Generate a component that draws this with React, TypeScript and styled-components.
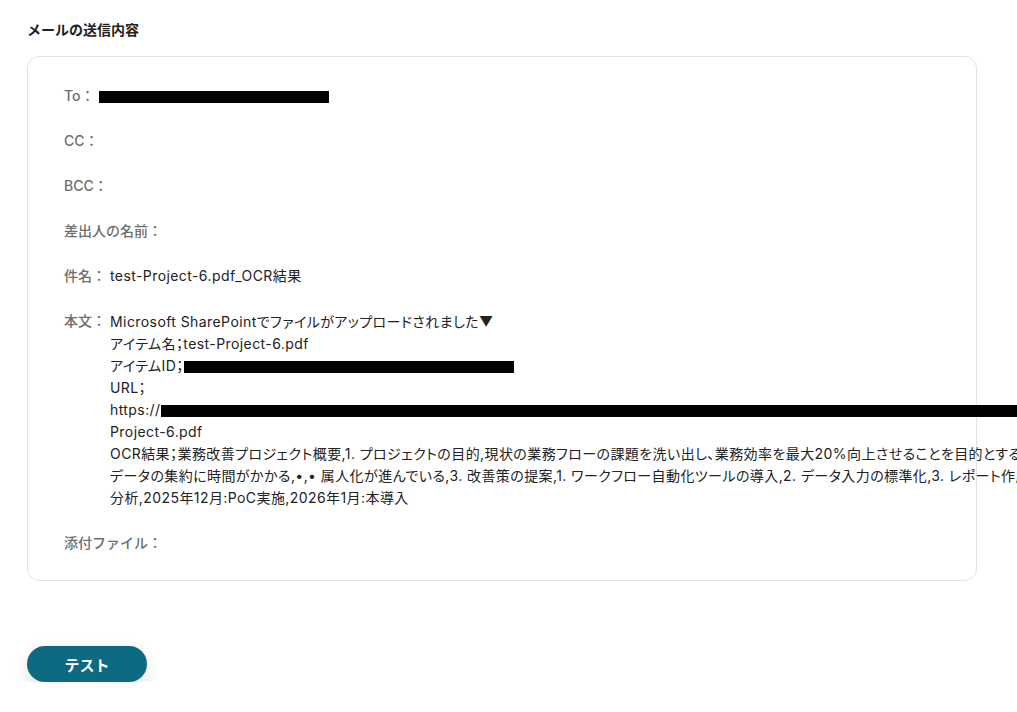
import React from "react";
import styled, { createGlobalStyle } from "styled-components";

const Global = createGlobalStyle`
  html, body {
    margin: 0;
    padding: 0;
    background: #fff;
    overflow: hidden;
  }
  body {
    font-family: Inter, "Noto Sans CJK JP", sans-serif;
    color: #222;
  }
`;

const Page = styled.div`
  padding: 20px 41px 0 27px;
  width: 1017px;
  box-sizing: border-box;
`;

const Heading = styled.h2`
  margin: 0 0 16px;
  font-size: 14px;
  font-weight: 700;
  line-height: 20px;
  color: #222;
`;

const Card = styled.div`
  width: 950px;
  box-sizing: border-box;
  border: 1px solid #e2e2e2;
  border-radius: 12px;
  padding: 28px 36px 26px;
  display: flex;
  flex-direction: column;
  gap: 23px;
`;

const Row = styled.div`
  display: flex;
  align-items: flex-start;
  gap: 4px;
  font-size: 14px;
  line-height: 22px;
`;

const Label = styled.span`
  color: #6e6e6e;
  font-weight: 500;
  white-space: nowrap;
  flex: none;
`;

const Value = styled.div`
  color: #222;
  white-space: nowrap;
  font-feature-settings: "palt";
  letter-spacing: 0.03em;
`;

const Body = styled(Value)`
  line-height: 22px;
  margin-top: 1px;
`;

const Line = styled.div`
  white-space: nowrap;
`;

const Redact = styled.span<{ $w: number }>`
  display: inline-block;
  width: ${(p) => p.$w}px;
  height: 12px;
  background: #000;
  vertical-align: middle;
`;

const Button = styled.button`
  margin-top: 65px;
  width: 120px;
  height: 36px;
  border: none;
  border-radius: 18px;
  background: #0d6a82;
  color: #fff;
  font-family: Inter, "Noto Sans CJK JP", sans-serif;
  font-size: 15px;
  font-weight: 700;
  box-shadow: 0 6px 16px rgba(0, 0, 0, 0.12);
  cursor: pointer;
`;

export default function App() {
  return (
    <>
      <Global />
      <Page>
        <Heading>メールの送信内容</Heading>
        <Card>
          <Row>
            <Label>To：</Label>
            <Value>
              <Redact $w={230} />
            </Value>
          </Row>
          <Row>
            <Label>CC：</Label>
          </Row>
          <Row>
            <Label>BCC：</Label>
          </Row>
          <Row>
            <Label>差出人の名前：</Label>
          </Row>
          <Row>
            <Label>件名：</Label>
            <Value>test-Project-6.pdf_OCR結果</Value>
          </Row>
          <Row>
            <Label>本文：</Label>
            <Body>
              <Line>Microsoft SharePointでファイルがアップロードされました▼</Line>
              <Line>アイテム名；test-Project-6.pdf</Line>
              <Line>
                アイテムID；<Redact $w={330} />
              </Line>
              <Line>URL；</Line>
              <Line>
                https://<Redact $w={860} />
              </Line>
              <Line>Project-6.pdf</Line>
              <Line>
                OCR結果；業務改善プロジェクト概要,1. プロジェクトの目的,現状の業務フローの課題を洗い出し、業務効率を最大20%向上させることを目的とする,2. 現状の課題
              </Line>
              <Line>
                データの集約に時間がかかる,•,• 属人化が進んでいる,3. 改善策の提案,1. ワークフロー自動化ツールの導入,2. データ入力の標準化,3. レポート作成の自動化
              </Line>
              <Line>分析,2025年12月:PoC実施,2026年1月:本導入</Line>
            </Body>
          </Row>
          <Row>
            <Label>添付ファイル：</Label>
          </Row>
        </Card>
        <Button>テスト</Button>
      </Page>
    </>
  );
}
